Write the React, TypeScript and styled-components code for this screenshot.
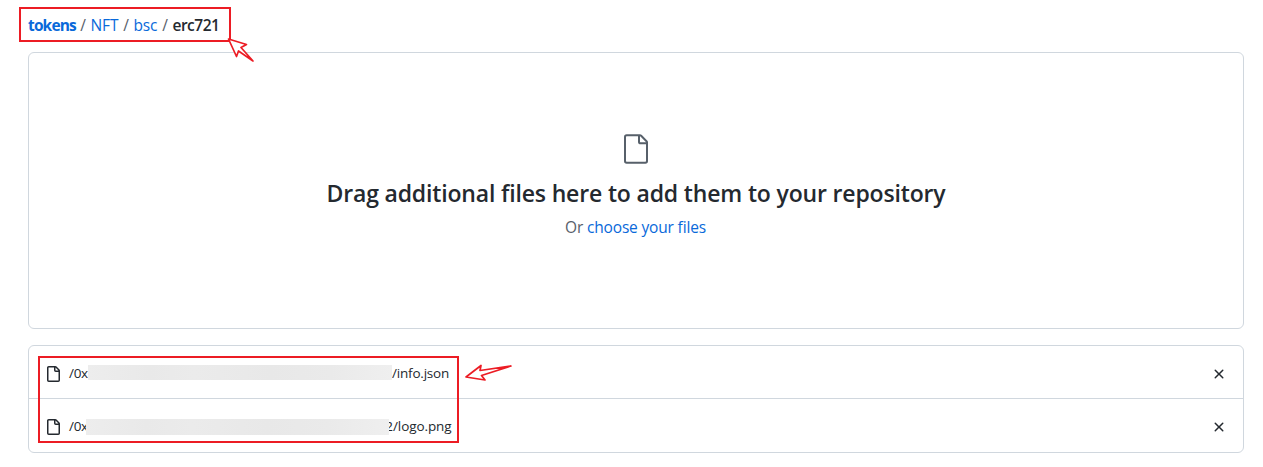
import React from "react";
import styled, { createGlobalStyle } from "styled-components";

const GlobalStyle = createGlobalStyle`
  * { box-sizing: border-box; }
  body { margin: 0; background: #fff; color: #24292f; font-family: "Open Sans", "Noto Sans", sans-serif; }
`;

const Page = styled.main`
  position: relative;
  width: 1263px;
  height: 467px;
  padding: 13px 19px 0 28px;
  overflow: hidden;
`;

const Breadcrumb = styled.nav`
  display: flex;
  align-items: center;
  height: 24px;
  font-size: 15.5px;
  line-height: 24px;
  white-space: pre;
`;

const Crumb = styled.a<{ $bold?: boolean; $current?: boolean; $width: number; $spacing?: number }>`
  width: ${(p) => p.$width}px;
  color: ${(p) => (p.$current ? "#24292f" : "#0969da")};
  font-weight: ${(p) => (p.$bold ? 700 : p.$current ? 600 : 400)};
  letter-spacing: ${(p) => p.$spacing ?? 0}px;
`;

const Slash = styled.span`
  width: 15px;
  text-align: center;
  color: #57606a;
`;

const DropZone = styled.section`
  display: flex;
  flex-direction: column;
  align-items: center;
  height: 277px;
  margin-top: 15px;
  padding-top: 80px;
  border: 1px solid #d0d7de;
  border-radius: 6px;
`;

const Title = styled.h2`
  margin: 10px 0 0;
  font-size: 23px;
  line-height: 36px;
  font-weight: 600;
  letter-spacing: -0.16px;
  white-space: nowrap;
`;

const Hint = styled.p`
  margin: 4px 1px 0 0;
  font-size: 15.5px;
  line-height: 24px;
  letter-spacing: -0.17px;
  color: #57606a;
  white-space: nowrap;
`;

const ChooseLink = styled.a`
  color: #0969da;
`;

const FileList = styled.ul`
  margin: 16px 0 0;
  padding: 0;
  list-style: none;
  border: 1px solid #d0d7de;
  border-radius: 6px;
`;

const FileRow = styled.li`
  display: flex;
  align-items: center;
  height: 52px;
  padding: 3px 16px 0;
  & + & { height: 54px; padding-top: 2px; border-top: 1px solid #d0d7de; }
`;

const FileName = styled.span`
  display: flex;
  align-items: center;
  flex: 1;
  margin: -2px 0 0 8px;
  font-size: 13.5px;
  line-height: 20px;
`;

const Prefix = styled.span<{ $width: number }>`
  width: ${(p) => p.$width}px;
  letter-spacing: -0.3px;
`;

const Redacted = styled.span<{ $width: number; $height: number; $drop?: number }>`
  position: relative;
  z-index: 1;
  width: ${(p) => p.$width}px;
  height: ${(p) => p.$height}px;
  margin-top: ${(p) => p.$drop ?? 0}px;
  background: linear-gradient(90deg, #ededed, #e9e9e9 20%, #ebebeb 35%, #e8e8e8 60%, #eaeaea 80%, #efefef);
`;

const HashTail = styled.span`
  display: flex;
  justify-content: flex-end;
  width: 4px;
`;

const Suffix = styled.span<{ $spacing: number }>`
  letter-spacing: ${(p) => p.$spacing}px;
`;

const Highlight = styled.div<{ $x: number; $y: number; $w: number; $h: number }>`
  position: absolute;
  left: ${(p) => p.$x}px;
  top: ${(p) => p.$y}px;
  width: ${(p) => p.$w}px;
  height: ${(p) => p.$h}px;
  border: 2px solid #ec1c24;
  pointer-events: none;
`;

const Arrow = styled.svg<{ $x: number; $y: number }>`
  position: absolute;
  left: ${(p) => p.$x}px;
  top: ${(p) => p.$y}px;
  fill: #fff;
  stroke: #ec1c24;
  stroke-width: 1.7;
  stroke-linejoin: round;
`;

const FileIcon = () => (
  <svg width="16" height="16" viewBox="0 0 16 16" fill="#24292f">
    <path d="M2 1.75C2 .784 2.784 0 3.75 0h6.586c.464 0 .909.184 1.237.513l2.914 2.914c.329.328.513.773.513 1.237v9.586A1.75 1.75 0 0 1 13.25 16h-9.5A1.75 1.75 0 0 1 2 14.25Zm1.75-.25a.25.25 0 0 0-.25.25v12.5c0 .138.112.25.25.25h9.5a.25.25 0 0 0 .25-.25V6h-2.75A1.75 1.75 0 0 1 9 4.25V1.5Zm6.75.062V4.25c0 .138.112.25.25.25h2.688l-.011-.013-2.914-2.914-.013-.011Z" />
  </svg>
);

const LargeFileIcon = () => (
  <svg width="32" height="32" viewBox="0 0 24 24" fill="#57606a">
    <path d="M3 3a2 2 0 0 1 2-2h9.982a2 2 0 0 1 1.414.586l4.018 4.018A2 2 0 0 1 21 7.018V21a2 2 0 0 1-2 2H5a2 2 0 0 1-2-2Zm2-.5a.5.5 0 0 0-.5.5v18a.5.5 0 0 0 .5.5h14a.5.5 0 0 0 .5-.5V8.5h-4a2 2 0 0 1-2-2v-4Zm10 0v4a.5.5 0 0 0 .5.5h4a.5.5 0 0 0-.146-.336l-4.018-4.018A.5.5 0 0 0 15 2.5Z" />
  </svg>
);

const CloseIcon = () => (
  <svg width="16" height="16" viewBox="0 0 16 16" fill="#24292f">
    <path d="M3.72 3.72a.75.75 0 0 1 1.06 0L8 6.94l3.22-3.22a.75.75 0 1 1 1.06 1.06L9.06 8l3.22 3.22a.75.75 0 1 1-1.06 1.06L8 9.06l-3.22 3.22a.75.75 0 0 1-1.06-1.06L6.94 8 3.72 4.78a.75.75 0 0 1 0-1.06Z" />
  </svg>
);

export default function App() {
  return (
    <Page>
      <GlobalStyle />
      <Breadcrumb>
        <Crumb $bold $width={47.5} $spacing={-0.85}>tokens</Crumb>
        <Slash>/</Slash>
        <Crumb $width={28} $spacing={-0.1}>NFT</Crumb>
        <Slash>/</Slash>
        <Crumb $width={24} $spacing={-0.2}>bsc</Crumb>
        <Slash>/</Slash>
        <Crumb $current $width={48} $spacing={-0.5}>erc721</Crumb>
      </Breadcrumb>
      <DropZone>
        <LargeFileIcon />
        <Title>Drag additional files here to add them to your repository</Title>
        <Hint>
          Or <ChooseLink>choose your files</ChooseLink>
        </Hint>
      </DropZone>
      <FileList>
        <FileRow>
          <FileIcon />
          <FileName>
            <Prefix $width={19}>/0x</Prefix>
            <Redacted $width={304} $height={15} />
            <Suffix $spacing={-0.2}>/info.json</Suffix>
          </FileName>
          <CloseIcon />
        </FileRow>
        <FileRow>
          <FileIcon />
          <FileName>
            <Prefix $width={17}>/0x</Prefix>
            <Redacted $width={303} $height={16} $drop={2} />
            <HashTail>2</HashTail>
            <Suffix $spacing={-0.1}>/logo.png</Suffix>
          </FileName>
          <CloseIcon />
        </FileRow>
      </FileList>
      <Highlight $x={19} $y={7} $w={212} $h={35} />
      <Highlight $x={38} $y={356} $w={421} $h={87} />
      <Arrow $x={225} $y={36} width="32" height="29">
        <path d="M3.5 3 21.5 8.5 16 11.5 28 25 13.5 15 11.5 20.5Z" />
      </Arrow>
      <Arrow $x={463} $y={362} width="52" height="22">
        <path d="M3 15 18 3.5 17 8.5 48 4 18.5 13.5 22 18Z" />
      </Arrow>
    </Page>
  );
}
